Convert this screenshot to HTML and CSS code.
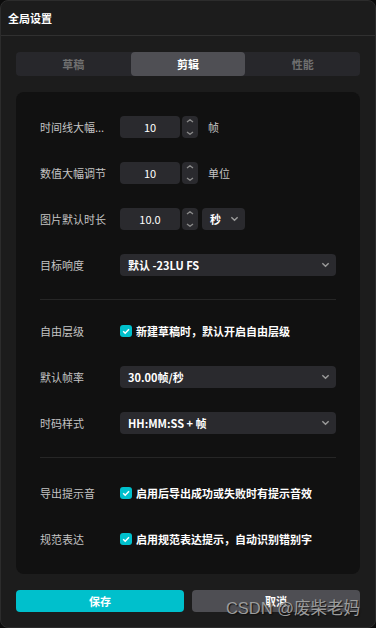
FILE: index.html
```html
<!DOCTYPE html>
<html>

<head>
    <title>全局设置</title>
    <meta name="viewport" content="width=device-width, initial-scale=1.0">
    <link rel="stylesheet" href="styles.css">
</head>

<body>
    <div class="dialog">
        <div class="dialog-header">全局设置</div>

        <div class="tabs">
            <div class="tab">草稿</div>
            <div class="tab active">剪辑</div>
            <div class="tab">性能</div>
        </div>

        <div class="panel">
            <div class="section first">
                <div class="row">
                    <div class="label" title="时间线大幅调节">时间线大幅...</div>
                    <div class="num-input">10</div>
                    <div class="spinner">
                        <svg viewBox="0 0 10 8"><path d="M2 3l3-2.2 3 2.2" /></svg>
                        <svg viewBox="0 0 10 8"><path d="M2 5l3 2.2 3-2.2" /></svg>
                    </div>
                    <div class="unit">帧</div>
                </div>
                <div class="row">
                    <div class="label">数值大幅调节</div>
                    <div class="num-input">10</div>
                    <div class="spinner">
                        <svg viewBox="0 0 10 8"><path d="M2 3l3-2.2 3 2.2" /></svg>
                        <svg viewBox="0 0 10 8"><path d="M2 5l3 2.2 3-2.2" /></svg>
                    </div>
                    <div class="unit">单位</div>
                </div>
                <div class="row">
                    <div class="label">图片默认时长</div>
                    <div class="num-input">10.0</div>
                    <div class="spinner">
                        <svg viewBox="0 0 10 8"><path d="M2 3l3-2.2 3 2.2" /></svg>
                        <svg viewBox="0 0 10 8"><path d="M2 5l3 2.2 3-2.2" /></svg>
                    </div>
                    <div class="select small">
                        <span>秒</span>
                        <svg class="chev" viewBox="0 0 10 6"><path d="M1.5 1l3.5 3.5 3.5-3.5" /></svg>
                    </div>
                </div>
                <div class="row">
                    <div class="label">目标响度</div>
                    <div class="select wide">
                        <span>默认 -23LU FS</span>
                        <svg class="chev" viewBox="0 0 10 6"><path d="M1.5 1l3.5 3.5 3.5-3.5" /></svg>
                    </div>
                </div>
            </div>

            <div class="section second">
                <div class="row">
                    <div class="label">自由层级</div>
                    <div class="check">
                        <svg viewBox="0 0 12 12"><path d="M3.2 6.2l2 2 3.8-4" /></svg>
                    </div>
                    <div class="check-text">新建草稿时，默认开启自由层级</div>
                </div>
                <div class="row">
                    <div class="label">默认帧率</div>
                    <div class="select wide">
                        <span>30.00帧/秒</span>
                        <svg class="chev" viewBox="0 0 10 6"><path d="M1.5 1l3.5 3.5 3.5-3.5" /></svg>
                    </div>
                </div>
                <div class="row">
                    <div class="label">时码样式</div>
                    <div class="select wide">
                        <span>HH:MM:SS + 帧</span>
                        <svg class="chev" viewBox="0 0 10 6"><path d="M1.5 1l3.5 3.5 3.5-3.5" /></svg>
                    </div>
                </div>
            </div>

            <div class="section third">
                <div class="row">
                    <div class="label">导出提示音</div>
                    <div class="check">
                        <svg viewBox="0 0 12 12"><path d="M3.2 6.2l2 2 3.8-4" /></svg>
                    </div>
                    <div class="check-text">启用后导出成功或失败时有提示音效</div>
                </div>
                <div class="row">
                    <div class="label">规范表达</div>
                    <div class="check">
                        <svg viewBox="0 0 12 12"><path d="M3.2 6.2l2 2 3.8-4" /></svg>
                    </div>
                    <div class="check-text">启用规范表达提示，自动识别错别字</div>
                </div>
            </div>
        </div>

        <div class="actions">
            <button class="btn primary">保存</button>
            <button class="btn">取消</button>
        </div>

        <div class="watermark">CSDN @废柴老妈</div>
    </div>
</body>

</html>
```

FILE: styles.css
```css
:root {
    --dialog-bg: #1c1c1c;
    --panel-bg: #111111;
    --field-bg: #2a2a2e;
    --accent: #00c0cc;
    --label: #c4c4c4;
}

html,
body {
    margin: 0;
    padding: 0;
    background: #0c0c0c;
}

body {
    font-family: "Noto Sans CJK SC", "Noto Sans", sans-serif;
    font-size: 11px;
    color: #fff;
}

.dialog {
    position: relative;
    width: 376px;
    height: 628px;
    box-sizing: border-box;
    background: var(--dialog-bg);
    border: 1px solid #2c2c2c;
    border-radius: 8px;
    overflow: hidden;
}

.dialog-header {
    height: 34px;
    line-height: 34px;
    padding-left: 7px;
    font-weight: 700;
    font-size: 11px;
    border-bottom: 1px solid #303030;
}

.tabs {
    display: flex;
    margin: 16px 15px 0;
    height: 24px;
    background: #27272b;
    border-radius: 4px;
}

.tab {
    flex: 1;
    text-align: center;
    line-height: 24px;
    color: #707070;
    font-weight: 700;
    border-radius: 4px;
}

.tab.active {
    background: #4f4f54;
    color: #fff;
}

.panel {
    margin: 16px 15px 0;
    padding: 0 24px;
    background: var(--panel-bg);
    border-radius: 8px;
    height: 482px;
    box-sizing: border-box;
}

.section {
    display: flex;
    flex-direction: column;
    gap: 24px;
}

.section.first {
    padding: 24px 0 23px;
    border-bottom: 1px solid #262626;
}

.section.second {
    padding: 20px 0 23px;
    border-bottom: 1px solid #262626;
}

.section.third {
    padding: 24px 0;
}

.row {
    display: flex;
    align-items: center;
    height: 22px;
}

.label {
    flex: none;
    width: 72px;
    margin-right: 8px;
    color: var(--label);
    white-space: nowrap;
}

.num-input {
    width: 60px;
    height: 22px;
    line-height: 22px;
    text-align: center;
    background: var(--field-bg);
    border-radius: 4px;
}

.spinner {
    width: 16px;
    height: 22px;
    margin-left: 2px;
    background: var(--field-bg);
    border-radius: 4px;
    display: flex;
    flex-direction: column;
    align-items: center;
    justify-content: center;
}

.spinner svg {
    width: 10px;
    height: 8px;
    fill: none;
    stroke: #8a8a8a;
    stroke-width: 1.4;
}

.unit {
    margin-left: 10px;
    color: var(--label);
}

.select {
    display: flex;
    align-items: center;
    justify-content: space-between;
    height: 22px;
    padding: 0 6px 0 8px;
    box-sizing: border-box;
    background: var(--field-bg);
    border-radius: 4px;
    font-weight: 700;
}

.select.small {
    width: 43px;
    margin-left: 4px;
}

.select.wide {
    flex: 1;
}

.chev {
    width: 9px;
    height: 6px;
    fill: none;
    stroke: #9a9a9a;
    stroke-width: 1.6;
}

.check {
    width: 12px;
    height: 12px;
    border-radius: 3px;
    background: var(--accent);
    display: flex;
}

.check svg {
    width: 12px;
    height: 12px;
    fill: none;
    stroke: #fff;
    stroke-width: 1.5;
}

.check-text {
    margin-left: 4px;
    font-weight: 700;
}

.actions {
    display: flex;
    gap: 8px;
    margin: 16px 15px 0;
}

.btn {
    flex: 1;
    height: 22px;
    border: none;
    border-radius: 4px;
    background: #4e4e53;
    color: #fff;
    font-family: inherit;
    font-size: 11px;
    font-weight: 700;
    padding: 0;
}

.btn.primary {
    background: var(--accent);
}

/* CSDN watermark laid over the buttons */
.watermark {
    position: absolute;
    right: 15px;
    bottom: 9px;
    font-family: "Liberation Sans", "Noto Sans CJK SC", sans-serif;
    font-size: 16.5px;
    line-height: 20px;
    color: #9c9c9c;
    text-shadow: 1px 1px 1px #111;
    pointer-events: none;
}
```
